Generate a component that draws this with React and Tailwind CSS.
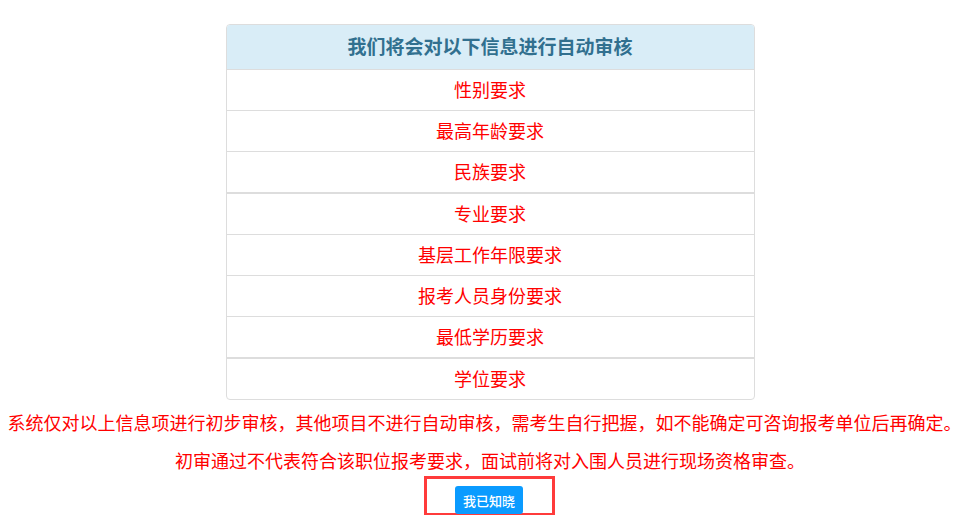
export default function App() {
  const rows = [
    { t: "性别要求" },
    { t: "最高年龄要求" },
    { t: "民族要求" },
    { t: "专业要求", thick: true },
    { t: "基层工作年限要求" },
    { t: "报考人员身份要求" },
    { t: "最低学历要求" },
    { t: "学位要求", thick: true },
  ];
  return (
    <div
      className="w-[961px] h-[515px] bg-white overflow-hidden"
      style={{ fontFamily: '"Noto Sans CJK SC", "Noto Sans", sans-serif' }}
    >
      <div className="pt-[24px]">
        <div className="pl-[19px]">
          <div className="mx-auto w-[529px] border border-[#dddddd] rounded-[4px] overflow-hidden">
            <div className="h-[44px] pb-[3px] bg-[#d9edf7] flex items-center justify-center text-[19px] font-bold text-[#31708f] leading-none">
              我们将会对以下信息进行自动审核
            </div>
            {rows.map((r, i) => (
              <div
                key={i}
                className={
                  r.thick
                    ? "h-[42px] pb-[2px] border-t-2 border-[#dddddd] flex items-center justify-center text-[18px] text-[#ff0000] leading-none"
                    : "h-[41px] pb-[2px] border-t border-[#dddddd] flex items-center justify-center text-[18px] text-[#ff0000] leading-none"
                }
              >
                {r.t}
              </div>
            ))}
          </div>
        </div>
        <div className="h-[44px] pl-[8px] flex items-center justify-center whitespace-nowrap text-[18px] text-[#ff0000] leading-none">
          系统仅对以上信息项进行初步审核，其他项目不进行自动审核，需考生自行把握，如不能确定可咨询报考单位后再确定。
        </div>
        <div className="h-[32px] pl-[19px] flex items-center justify-center whitespace-nowrap text-[18px] text-[#ff0000] leading-none">
          初审通过不代表符合该职位报考要求，面试前将对入围人员进行现场资格审查。
        </div>
        <div className="pl-[17px] flex justify-center">
          <div className="w-[131px] h-[40px] border-[3px] border-[#ff3b3b] flex items-center justify-center">
            <button className="w-[68px] h-[28px] mt-[8px] bg-[#0a9bff] rounded-[3px] text-white text-[13px] font-medium leading-none flex items-center justify-center">
              我已知晓
            </button>
          </div>
        </div>
      </div>
    </div>
  );
}
